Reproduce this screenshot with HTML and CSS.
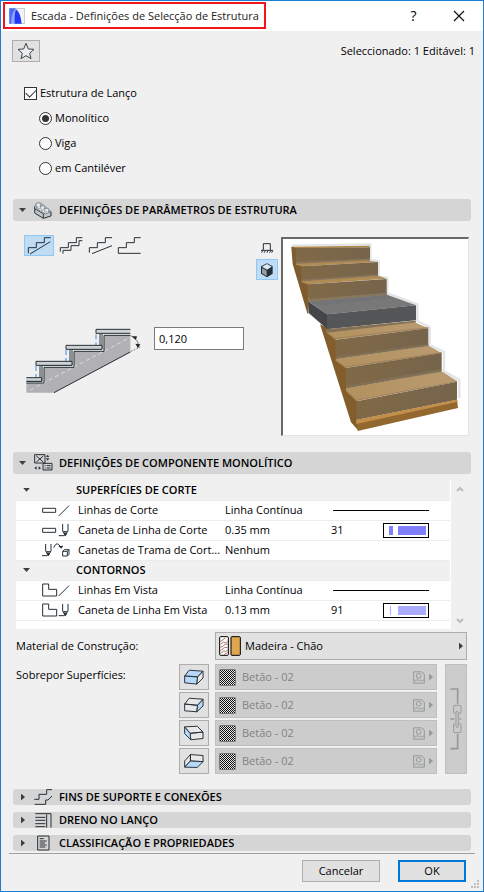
FILE: index.html
```html
<!DOCTYPE html>
<html lang="pt">
<head>
<meta charset="utf-8">
<meta name="viewport" content="width=device-width, initial-scale=1">
<title>Escada - Definições de Selecção de Estrutura</title>
<link rel="stylesheet" href="styles.css">
</head>
<body>
<svg class="defs" aria-hidden="true">
  <defs>
    <pattern id="checker" width="2" height="2" patternUnits="userSpaceOnUse">
      <rect width="2" height="2" fill="#e8e8e8"/><rect width="1" height="1" fill="#111"/><rect x="1" y="1" width="1" height="1" fill="#111"/>
    </pattern>
    <linearGradient id="wood" x1="0" y1="0" x2="1" y2="0"><stop offset="0" stop-color="#806947"/><stop offset="1" stop-color="#76644b"/></linearGradient>
    <linearGradient id="tread" x1="0" y1="0" x2="1" y2="0"><stop offset="0" stop-color="#b39160"/><stop offset="1" stop-color="#b99b70"/></linearGradient>
    <symbol id="pen" viewBox="0 0 36 42"><path d="M14 3v21l8 13 8-13V3M16 26h12M2 38h18" /><path d="M18 30h8l-4 8z" class="solid"/></symbol>
    <symbol id="picture" viewBox="0 0 36 38"><path d="M2 2h24l8 7v27H2z"/><circle cx="17" cy="14" r="7"/><path d="M3 25l5 5 5-6 6 6 5-4 4 4 5-5"/></symbol>
  </defs>
</svg>
<main class="dialog">
  <header class="titlebar">
    <h1 class="title">
      <svg class="logo" width="16" height="16" viewBox="0 0 48 48"><rect x="1" y="1" width="46" height="46" rx="2" fill="#f1f2f5" stroke="#a8acb4" stroke-width="2"/><path d="M1 1h19L8 47H1z" fill="#4a6af0"/><path d="M6 47Q7 12 20 3l4 44z" fill="#8fa6ff"/><path d="M17 47Q16 16 21 4Q34 12 38 47z" fill="#2338f5"/></svg>
      Escada - Definições de Selecção de Estrutura
    </h1>
    <div class="window-buttons">
      <button type="button" class="window-button" aria-label="Ajuda">?</button>
      <button type="button" class="window-button" aria-label="Fechar"><svg width="12" height="12" viewBox="0 0 12 12"><path d="M1 1l10 10M11 1L1 11" fill="none" stroke="#111" stroke-width="1.2"/></svg></button>
    </div>
  </header>

  <div class="content">
    <div class="toolbar">
      <button type="button" class="button favorite" aria-label="Favoritos"><svg width="18" height="18" viewBox="0 0 54 54"><path d="M27 4l7 17 17 1-13 12 4 16-15-9-15 9 4-16L3 22l17-1z" fill="#ececec" stroke="#3a464a" stroke-width="3"/></svg></button>
      <p class="status">Seleccionado: 1 Editável: 1</p>
    </div>

    <form class="structure">
      <label class="choice"><input type="checkbox" class="check" checked>Estrutura de Lanço</label>
      <label class="choice sub"><input type="radio" class="radio" name="tipo" checked>Monolítico</label>
      <label class="choice sub"><input type="radio" class="radio" name="tipo">Viga</label>
      <label class="choice sub"><input type="radio" class="radio" name="tipo">em Cantiléver</label>
    </form>

    <section>
      <button type="button" class="section-head tall" aria-expanded="true">
        <span class="arrow-down"></span>
        <svg class="icon" width="20" height="20" viewBox="98 270 60 60"><path d="M103 288v21l26 16 23-7v-14l-30-25-14 1z" fill="#c2c7ca" stroke="#7d868b" stroke-width="2"/><path d="M103 290v19l26 16 23-7v-13M103 296l26 15v14M129 311l23-6" fill="none" stroke="#394349" stroke-width="3"/><path d="M106 286q2-9 9-8l7 4-3 9 9-5 6 3-2 9 8-4 6 4-1 8 6-1-16 7-24-14z" fill="#e4e6e7" stroke="#858d92" stroke-width="3"/><path d="M108 286l8 12 5-6 4 12 6-6 3 10 6-4" fill="none" stroke="#858d92" stroke-width="2"/></svg>
        <span>DEFINIÇÕES DE PARÂMETROS DE ESTRUTURA</span>
      </button>
      <div class="params">
        <div class="geometry">
          <div class="shapes">
            <button type="button" class="tool wide active" aria-label="Base lisa"><svg width="24" height="19" viewBox="82 36 72 57"><path d="M86 88V71h24V56h24V41h19M91 90l61-37" class="line"/></svg></button>
            <button type="button" class="tool" aria-label="Base em degraus"><svg width="24" height="19" viewBox="175 36 72 57"><path d="M179 83V71h24V56h24V41h18M187 89V79h24V65h24V50h10" class="line"/></svg></button>
            <button type="button" class="tool" aria-label="Base inclinada"><svg width="24" height="19" viewBox="267 36 72 57"><path d="M271 86V71h24V56h24V41h20M279 89l60-24" class="line"/></svg></button>
            <button type="button" class="tool" aria-label="Base horizontal"><svg width="24" height="19" viewBox="352 36 72 57"><path d="M423 88h-67V71h24V56h24V41h19" class="line"/></svg></button>
          </div>
          <div class="thickness">
            <svg class="section-figure" width="116" height="67" viewBox="77 303 348 201" role="img" aria-label="Espessura da estrutura">
              <path d="M78 500v-29h53v-47h90v-48h90v-48h79v51L161 500z" fill="#b1b0b5"/>
              <path d="M90 492L390 334" stroke="#ddd" stroke-width="3" stroke-dasharray="12 9"/>
              <path d="M107 420v36M197 372v36M287 325v36" stroke="#3d86ef" stroke-width="3" stroke-dasharray="15 9"/>
              <path d="M119 420v50M209 372v50M299 324v50" stroke="#f0f0f0" stroke-width="20" opacity="0"/>
              <path d="M78 471h53v-47h90v-48h90v-48h79M161 500l229-122" fill="none" stroke="#273037" stroke-width="3"/>
              <path d="M125 418v48H78M215 370v48h-90M305 323v46h-90" fill="none" stroke="#273037" stroke-width="3"/>
              <g fill="#cdd3d4" stroke="#273037" stroke-width="3"><path d="M78 455h46v11H78M107 406h108v12H107zM197 358h108v12H197zM390 310H287v12h103"/></g>
              <path d="M119 419v36M209 371v35M299 323v35" stroke="#273037" stroke-width="3"/>
              <path d="M391 329l13 6M392 376l28-13" stroke="#394249" stroke-width="2" stroke-dasharray="5 4"/>
              <path d="M400 336q15 8 14 24" fill="none" stroke="#394249" stroke-width="2"/><path d="M393 331h17l-3 10zM405 353l15 2-7 12z" fill="#20282e"/>
            </svg>
            <input type="text" class="number" value="0,120" aria-label="Espessura">
          </div>
        </div>
        <div class="views">
          <button type="button" class="tool view" aria-label="Vista 2D"><svg width="14" height="14" viewBox="780 51 42 42"><path d="M790 78V59h21v19M783 79h36M788 80l-3 6M796 80l-3 6M804 80l-3 6M812 80l-3 6M818 80l-3 6" class="line"/></svg></button>
          <button type="button" class="tool view active" aria-label="Vista 3D"><svg width="14" height="16" viewBox="780 110 42 48"><path d="M801 114l17 9v22l-17 11-18-11v-22z" fill="#22303a"/><path d="M801 116l14 8-14 9-15-9z" fill="#d8eaf6"/><path d="M786 128l14 8v16l-14-8z" fill="#989da1"/></svg></button>
        </div>
        <div class="preview">
          <svg class="stairs" viewBox="99 27 555 588" role="img" aria-label="Pré-visualização da escada">
            <path d="M125 47l236-4v47l25 4v45l26 4v47l90 33v50l37 18v55l43 19v59l46 26v55" fill="none" stroke="#e2e4e7" stroke-width="7"/>
            <path d="M124 51h16v50l17 8v45l18 8v90l-3-2-44-148z" fill="#7f5c2f"/>
            <path d="M210 283l21 10 27 34v60l31 27v61l32 37v57l3 32-21-24z" fill="#835d2b"/>
            <path d="M137 52h223v38l-222 11z" fill="url(#wood)"/><path d="M124 50l235-3v4l-222 3z" fill="#b18444"/>
            <path d="M138 98l222-12v7l25 3-230 13-17-5z" fill="#b18b54"/><path d="M138 95l222-9v5l-222 10z" fill="#87765d"/>
            <path d="M155 109l229-13v42l-230 18z" fill="url(#wood)"/>
            <path d="M155 152l229-15 26 9-237 17-18-6z" fill="#b18b54"/><path d="M155 149l229-16v5l-229 16z" fill="#87765d"/>
            <path d="M173 163l237-16v47l-235 18z" fill="url(#wood)"/><path d="M174 207l236-19v7l-235 20z" fill="#87765d"/><path d="M176 212l234-17v3l-235 18z" fill="#b58646"/>
            <path d="M175 214l236-20 87 32-267 27z" fill="#737475"/>
            <path d="M174 214l57 39v44l-55-48z" fill="#454647"/><path d="M231 253l267-27v45l-267 27z" fill="#555657"/>
            <path d="M174 214l57 37 266-26-66-22-221 24z" fill="#808080" opacity=".35"/>
            <path d="M231 298l266-26v6l38 17-279 34-27-22z" fill="url(#tread)"/><path d="M231 298l266-26v5l-266 31z" fill="#827057"/><path d="M230 308l26 17 279-32" class="edge"/>
            <path d="M256 329l279-34v52l-278 40z" fill="url(#wood)"/>
            <path d="M257 387l279-40 39 22-288 45-30-22z" fill="url(#tread)"/><path d="M257 380l278-39v7l-278 39z" fill="#827057"/><path d="M257 391l30 20 288-43" class="edge"/>
            <path d="M287 414l288-45v54l-287 53z" fill="url(#wood)"/>
            <path d="M288 475l287-51 46 29-302 60-31-30z" fill="url(#tread)"/><path d="M288 467l286-50v8l-286 49z" fill="#827057"/><path d="M288 481l31 30 302-57" class="edge"/>
            <path d="M319 514l302-59v54l-302 61z" fill="url(#wood)"/>
            <path d="M318 571l303-61 3 24-301 69z" fill="#93682f"/><path d="M318 571l303-62 3 6-305 67z" fill="#c38e47"/>
          </svg>
        </div>
      </div>
    </section>

    <section>
      <button type="button" class="section-head tall" aria-expanded="true">
        <span class="arrow-down"></span>
        <svg class="icon" width="20" height="20" viewBox="98 26 60 60"><path d="M103 31h31v25h-31zM108 35l21 18M129 35l-21 18M128 57h27v20h-27zM133 64h3M139 64h12M133 71h3M139 71h12" class="line"/><path d="M137 38l5-7 5 7zM137 42h10l-5 7zM102 71l7-5v10zM122 71l-7-5v10z" fill="#273037"/></svg>
        <span>DEFINIÇÕES DE COMPONENTE MONOLÍTICO</span>
      </button>
      <div class="list">
        <table class="attributes">
          <colgroup><col class="c-icon"><col class="c-name"><col class="c-value"><col class="c-index"><col class="c-sample"></colgroup>
          <tbody>
            <tr class="group"><th><span class="arrow-down"></span></th><th colspan="4">SUPERFÍCIES DE CORTE</th></tr>
            <tr><td><svg width="28" height="16" viewBox="0 0 84 48"><path d="M2 19h39v12H2zM50 42l31-31" class="line"/></svg></td><td>Linhas de Corte</td><td>Linha Contínua</td><td colspan="2"><span class="rule"></span></td></tr>
            <tr><td><svg width="28" height="16" viewBox="0 0 84 48"><path d="M2 19h39v12H2z" class="line"/><use href="#pen" x="48" y="3" width="36" height="42" class="line"/></svg></td><td>Caneta de Linha de Corte</td><td>0.35 mm</td><td>31</td><td><span class="swatch thick"><i></i><b></b></span></td></tr>
            <tr><td><svg width="28" height="16" viewBox="0 0 84 48"><use href="#pen" x="-3" y="3" width="36" height="42" class="line"/><path d="M35 17Q45-6 56 16M62 28h14v14H62zM62 28l5-5h14v14l-5 5M76 28l5-5" class="line"/><path d="M49 12l15-1-6 9z" class="solid"/></svg></td><td>Canetas de Trama de Cort...</td><td>Nenhum</td><td></td><td></td></tr>
            <tr class="group"><th><span class="arrow-down"></span></th><th colspan="4">CONTORNOS</th></tr>
            <tr><td><svg width="28" height="16" viewBox="0 0 84 48"><path d="M2 6h18v16h24v20H2zM50 42l31-31" class="line"/></svg></td><td>Linhas Em Vista</td><td>Linha Contínua</td><td colspan="2"><span class="rule"></span></td></tr>
            <tr><td><svg width="28" height="16" viewBox="0 0 84 48"><path d="M2 6h18v16h24v20H2z" class="line"/><use href="#pen" x="48" y="3" width="36" height="42" class="line"/></svg></td><td>Caneta de Linha Em Vista</td><td>0.13 mm</td><td>91</td><td><span class="swatch thin"><i></i><b></b></span></td></tr>
          </tbody>
        </table>
        <div class="scroll" aria-hidden="true">
          <svg width="8" height="6" viewBox="0 0 8 6"><path d="M1 5l3-3 3 3" /></svg>
          <svg width="8" height="6" viewBox="0 0 8 6"><path d="M1 1l3 3 3-3" /></svg>
        </div>
      </div>

      <div class="materials">
        <label class="caption" for="material">Material de Construção:</label>
        <div class="popup material">
          <select id="material"><option>Madeira - Chão</option></select>
          <svg class="popup-icon" width="22" height="20" viewBox="0 0 66 60"><rect x="2" y="2" width="26" height="56" rx="3" fill="#fff" stroke="#000" stroke-width="3"/><path d="M4 16L19 6M5 24l9-6 6 3 7-6M4 34l9-4 6-6 7 1M4 44l12-9 10-1M5 52l10-8 4 3 7-5M15 56l11-7" fill="none" stroke="#9e5b4d" stroke-width="2.5"/><rect x="36" y="2" width="28" height="56" rx="3" fill="#dfa650" stroke="#000" stroke-width="3"/></svg>
          <span class="arrow-right"></span>
        </div>
        <p class="caption override-caption">Sobrepor Superfícies:</p>
        <div class="overrides">
          <button type="button" class="button face" aria-label="Superfície superior"><svg width="20" height="16" viewBox="551 118 62 48"><path d="M553 139l14-18 43 3-17 17z" class="blue"/><path d="M553 139l40 3-2 22-38-4z" class="blue"/><path d="M593 142l17-18v21l-19 19z" class="box"/></svg></button>
          <div class="popup"><select disabled aria-label="Superfície superior"><option>Betão - 02</option></select><svg class="popup-icon" width="17" height="17"><rect x="0.5" y="0.5" width="16" height="16" rx="1" fill="url(#checker)" stroke="#777"/></svg><svg class="picture" width="12" height="13"><use href="#picture"/></svg><span class="arrow-right"></span></div>
          <button type="button" class="button face" aria-label="Superfície lateral direita"><svg width="20" height="16" viewBox="551 202 62 48"><path d="M553 223l14-18 43 3-17 19zM553 223l40 4-2 20-38-3z" class="box"/><path d="M593 227l17-19v21l-19 18z" class="blue"/></svg></button>
          <div class="popup"><select disabled aria-label="Superfície lateral direita"><option>Betão - 02</option></select><svg class="popup-icon" width="17" height="17"><rect x="0.5" y="0.5" width="16" height="16" rx="1" fill="url(#checker)" stroke="#777"/></svg><svg class="picture" width="12" height="13"><use href="#picture"/></svg><span class="arrow-right"></span></div>
          <button type="button" class="button face" aria-label="Superfície lateral esquerda"><svg width="20" height="16" viewBox="551 286 62 48"><path d="M553 291l39-2 18 18-40 4zM570 311l40-4v20l-38 4z" class="box"/><path d="M553 291l17 20 2 20-19-19z" class="blue"/></svg></button>
          <div class="popup"><select disabled aria-label="Superfície lateral esquerda"><option>Betão - 02</option></select><svg class="popup-icon" width="17" height="17"><rect x="0.5" y="0.5" width="16" height="16" rx="1" fill="url(#checker)" stroke="#777"/></svg><svg class="picture" width="12" height="13"><use href="#picture"/></svg><span class="arrow-right"></span></div>
          <button type="button" class="button face" aria-label="Superfície inferior"><svg width="20" height="16" viewBox="551 369 62 48"><path d="M571 373l39 3v19l-39-2zM553 393l18-20v20l-18 19z" class="box"/><path d="M571 393l39 2-18 18-39-1z" class="blue"/></svg></button>
          <div class="popup"><select disabled aria-label="Superfície inferior"><option>Betão - 02</option></select><svg class="popup-icon" width="17" height="17"><rect x="0.5" y="0.5" width="16" height="16" rx="1" fill="url(#checker)" stroke="#777"/></svg><svg class="picture" width="12" height="13"><use href="#picture"/></svg><span class="arrow-right"></span></div>
          <button type="button" class="chain" disabled aria-label="Ligar superfícies"><svg width="12" height="62" viewBox="386 174 36 186"><path d="M387 177h22v44M409 312v44h-22" fill="none" stroke="#95999b" stroke-width="5"/><path d="M402 250h-3q-2 0-2-3v-17q0-4 4-4h14q4 0 4 4v17q0 3-3 3h-3M402 281h-3q-2 0-2 3v19q0 5 4 5h14q4 0 4-5v-19q0-3-3-3h-3M404 290v-44q4-6 7 0v44q-4 5-7 0" fill="none" stroke="#95999b" stroke-width="3"/><path d="M387 267h12M414 267h6" stroke="#95999b" stroke-width="4"/></svg></button>
        </div>
      </div>
    </section>

    <div class="collapsed">
      <button type="button" class="section-head" aria-expanded="false"><span class="arrow-right"></span><svg class="icon" width="20" height="18" viewBox="98 24 60 54"><path d="M155 29h-16v14h-23v15h-14M103 73h33V60h7l12-12" class="line"/></svg><span>FINS DE SUPORTE E CONEXÕES</span></button>
      <button type="button" class="section-head" aria-expanded="false"><span class="arrow-right"></span><svg class="icon" width="20" height="16" viewBox="98 96 60 48"><path d="M105 101h47v42M105 112h30M105 121h30M105 131h30M105 140h30M139 103v40" class="line"/></svg><span>DRENO NO LANÇO</span></button>
      <button type="button" class="section-head" aria-expanded="false"><span class="arrow-right"></span><svg class="icon" width="20" height="16" viewBox="98 164 60 48"><path d="M112 167h34v42h-34zM118 175h12M118 182h21M118 188h16M118 194h21M118 200h17" class="line"/></svg><span>CLASSIFICAÇÃO E PROPRIEDADES</span></button>
    </div>
  </div>

  <footer class="footer">
    <button type="button" class="button action">Cancelar</button>
    <button type="button" class="button action primary">OK</button>
    <svg class="grip" width="8" height="8" viewBox="0 0 8 8"><path d="M6 0h2v2H6zM3 3h2v2H3zM6 3h2v2H6zM0 6h2v2H0zM3 6h2v2H3zM6 6h2v2H6z" fill="#bdbdbd"/></svg>
  </footer>
</main>
</body>
</html>
```

FILE: styles.css
```css
* { box-sizing: border-box; }

body {
  margin: 0;
  background: #f0f0f0;
  color: #000;
  font: 11px/16px "Open Sans", "Noto Sans", sans-serif;
}

h1, p { margin: 0; font-size: inherit; font-weight: inherit; }
svg { display: block; flex: none; }
button, input, select { margin: 0; padding: 0; color: inherit; font: inherit; }
.defs { position: absolute; width: 0; height: 0; }

.line { fill: none; stroke: #273037; stroke-width: 3; }
.solid { fill: #273037; }
.box { fill: #e8e8e8; stroke: #273037; stroke-width: 3; }
.blue { fill: #b7d7fb; stroke: #273037; stroke-width: 3; }
.edge { fill: none; stroke: #a18058; stroke-width: 3; }

.dialog {
  position: relative;
  display: flex;
  flex-direction: column;
  min-height: 100vh;
  border: 1px solid #1a7fd4;
}

/* Title bar */
.titlebar {
  display: flex;
  justify-content: space-between;
  height: 30px;
  padding: 1px 2px 2px;
  background: #fff;
}
.title {
  display: flex;
  align-items: center;
  gap: 6px;
  padding: 0 5px 0 4px;
  border: 2px solid #f0161b;
  color: #222;
  white-space: nowrap;
}
.window-buttons { display: flex; }
.window-button {
  display: grid;
  place-items: center;
  width: 45px;
  border: 0;
  background: none;
  font-size: 14px;
}

/* Body */
.content { padding: 9px 12px 0; }
.toolbar { display: flex; align-items: center; justify-content: space-between; margin: 0 -4px 0 -1px; }
.button {
  display: grid;
  place-items: center;
  border: 1px solid #adadad;
  background: #e1e1e1;
}
.favorite { width: 28px; height: 22px; }

.structure { display: grid; gap: 9px; padding: 23px 11px 23px; }
.choice { display: flex; align-items: center; gap: 3px; }
.sub { padding-left: 15px; }
.check, .radio {
  display: grid;
  place-items: center;
  appearance: none;
  width: 13px;
  height: 13px;
  border: 1px solid #333;
  background: #fff;
}
.radio { border-radius: 50%; }
.check:checked::before {
  width: 9px;
  height: 5px;
  margin-bottom: 3px;
  border: solid #333;
  border-width: 0 0 1px 1px;
  transform: rotate(-45deg);
  content: "";
}
.radio:checked::before {
  width: 7px;
  height: 7px;
  border-radius: 50%;
  background: #333;
  content: "";
}

/* Section headers */
.section-head {
  display: flex;
  align-items: center;
  width: 100%;
  height: 16px;
  padding: 0 6px;
  border: 0;
  border-radius: 3px;
  background: #d5d5d5;
  font-weight: 600;
  white-space: nowrap;
}
.tall { height: 22px; }
.icon { margin: 0 6px 0 7px; }
.arrow-down, .arrow-right { display: block; flex: none; background: #404040; }
.arrow-down { width: 7px; height: 4px; clip-path: polygon(0 0, 100% 0, 50% 100%); }
.arrow-right { width: 4px; height: 7px; clip-path: polygon(0 0, 100% 50%, 0 100%); }
.section-head .arrow-right { margin: 0 1px 0 2px; }

/* Structure parameters */
.params { display: flex; padding: 16px 2px 16px 11px; }
.geometry { flex: 1; }
.shapes { display: flex; gap: 5px; margin-top: -2px; }
.tool {
  display: grid;
  place-items: center;
  width: 24px;
  height: 21px;
  border: 0;
  background: none;
}
.wide { width: 30px; }
.view { width: 22px; }
.active { border: 1px solid #8fc7f5; background: #bfdcf4; }
.thickness { display: flex; align-items: flex-start; gap: 12px; padding: 71px 0 0 2px; }
.number {
  width: 90px;
  height: 23px;
  padding: 0 4px;
  border: 1px solid #7a7a7a;
  border-radius: 0;
  background: #fff;
}
.views { display: grid; align-content: start; gap: 1px; margin-right: 3px; }
.preview {
  width: 188px;
  height: 199px;
  border: 1px solid #e3e3e3;
  border-top: 2px solid #696969;
  border-left: 2px solid #696969;
  background: #fff;
}
.stairs { width: 100%; height: 100%; }

/* Attribute list */
.list { display: flex; height: 149px; margin: 6px 3px 3px; background: #fff; }
.attributes { flex: 1; align-self: flex-start; table-layout: fixed; border-collapse: collapse; }
.c-icon { width: 60px; }
.c-name { width: 149px; }
.c-value { width: 106px; }
.c-index { width: 52px; }
.attributes tr { height: 20px; border-bottom: 1px solid #ececec; }
.attributes td, .attributes th { height: 20px; padding: 0; line-height: 18px; text-align: left; white-space: nowrap; }
.attributes td svg { margin-left: 26px; }
.attributes td:nth-child(2) { padding-left: 2px; }
.group { background: #f0f0f0; }
.group th { font-weight: 600; }
.group th:first-child { padding-left: 7px; }
.rule { display: block; height: 1px; margin: 0 21px 0 2px; background: #000; }
.swatch {
  display: flex;
  align-items: stretch;
  width: 46px;
  height: 15px;
  padding: 2px;
  border: 1px solid #000;
  background: #fff;
}
.swatch i { margin: 0 5px 0 3px; }
.swatch b { flex: 1; }
.thick i { width: 4px; }
.thin i { width: 1px; margin: 0 7px 0 4px; }
.thick i, .thick b { background: #8080ff; }
.thin i, .thin b { background: #acacff; }
.scroll {
  display: flex;
  flex-direction: column;
  align-items: center;
  justify-content: space-between;
  width: 18px;
  padding: 6px 0 5px;
  border-left: 1px solid #fff;
  background: #f0f0f0;
}
.scroll path { fill: none; stroke: #bdbdbd; stroke-width: 2; }

/* Materials */
.materials {
  display: grid;
  grid-template-columns: 163px 1fr;
  row-gap: 4px;
  padding: 0 4px 15px 3px;
}
.caption { align-self: center; }
.override-caption { align-self: start; padding-top: 3px; }
.popup { position: relative; display: flex; align-items: center; }
.popup select {
  width: 100%;
  height: 26px;
  padding-left: 26px;
  appearance: none;
  border: 1px solid #adadad;
  border-radius: 0;
  background: #e1e1e1;
}
.popup select:disabled { border-color: #bfbfbf; background: #ccc; color: #838383; opacity: 1; }
.material { margin-left: 36px; }
.material select { height: 28px; padding-left: 29px; }
.popup-icon { position: absolute; left: 4px; pointer-events: none; }
.popup .arrow-right { position: absolute; right: 4px; pointer-events: none; }
select:disabled ~ .arrow-right { background: #95999b; }
.picture { position: absolute; right: 12px; fill: none; stroke: #95999b; stroke-width: 3; pointer-events: none; }
.overrides {
  display: grid;
  grid-template-columns: 30px 1fr 22px;
  grid-auto-rows: 26px;
  gap: 2px 0;
}
.overrides .popup { margin: 0 8px 0 6px; }
.chain {
  display: grid;
  place-items: center;
  grid-row: 1 / 5;
  grid-column: 3;
  border: 1px solid #bfbfbf;
  background: #ccc;
}

.collapsed { display: grid; gap: 7px; }

/* Footer */
.footer {
  display: flex;
  flex: 1;
  align-items: flex-start;
  justify-content: flex-end;
  gap: 18px;
  margin: 2px 8px 0;
  padding: 6px 9px 8px 0;
  border-top: 1px solid #a0a0a0;
}
.action { width: 78px; height: 22px; }
.primary { width: 68px; border: 2px solid #0078d7; }
.grip { position: absolute; right: 4px; bottom: 3px; }
```
